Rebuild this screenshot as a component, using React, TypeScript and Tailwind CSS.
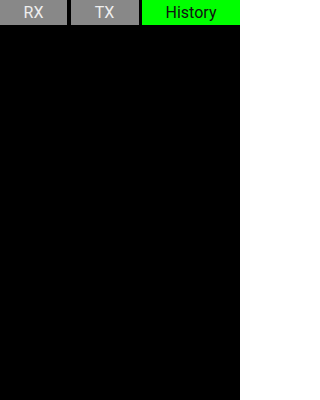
export default function App() {
  const tabs = [
    { label: "RX", active: false, width: "w-[67px]" },
    { label: "TX", active: false, width: "w-[68px]" },
    { label: "History", active: true, width: "flex-1" },
  ];

  return (
    <div className="w-[240px] h-[400px] bg-black flex flex-col" style={{ fontFamily: "Roboto, 'Liberation Sans', sans-serif" }}>
      {/* Tab bar */}
      <div className="flex gap-[3.5px] h-[25px]">
        {tabs.map((tab) => (
          <button
            key={tab.label}
            className={`${tab.width} h-full flex items-center justify-center text-[16px] leading-none ${
              tab.active ? "bg-[#00ff00] text-[#111]" : "bg-[#888888] text-[#eeeeee]"
            }`}
          >
            {tab.label}
          </button>
        ))}
      </div>
      {/* Content */}
      <div className="flex-1 bg-black"></div>
    </div>
  );
}
